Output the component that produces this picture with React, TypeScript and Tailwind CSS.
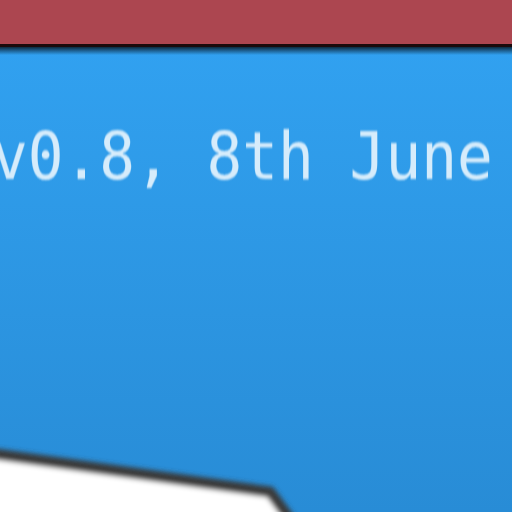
import React from 'react';

export default function App() {
  return (
    <div className="relative flex flex-col h-[512px] w-[512px] overflow-hidden">
      <div className="h-[47px] bg-[#ac4650] border-b-[3px] border-[#1a0a0c]" />
      <div className="relative flex-1 bg-gradient-to-b from-[#31a1f0] to-[#288cd6]">
        <div className="absolute inset-x-0 top-0 h-[8px] bg-gradient-to-b from-[#0c2a40] to-transparent" />
        <p
          className="pt-[77px] -ml-[8px] origin-left scale-x-[0.9] whitespace-nowrap text-[66px] leading-[1] text-[#d6ecfb] blur-[0.8px]"
          style={{ fontFamily: '"DejaVu Sans Mono", "Liberation Mono", monospace' }}
        >
          v0.8, 8th June
        </p>
      </div>
      <svg className="absolute left-0 top-0" width="512" height="512" viewBox="0 0 512 512">
        <defs>
          <filter id="soft" x="-10%" y="-10%" width="120%" height="120%">
            <feGaussianBlur stdDeviation="2.5" />
          </filter>
        </defs>
        <g filter="url(#soft)">
          <polygon points="-20,452 270,492 298,530 -20,530" fill="#ffffff" stroke="#3a3a3a" strokeWidth="11" strokeLinejoin="round" />
        </g>
      </svg>
    </div>
  );
}
